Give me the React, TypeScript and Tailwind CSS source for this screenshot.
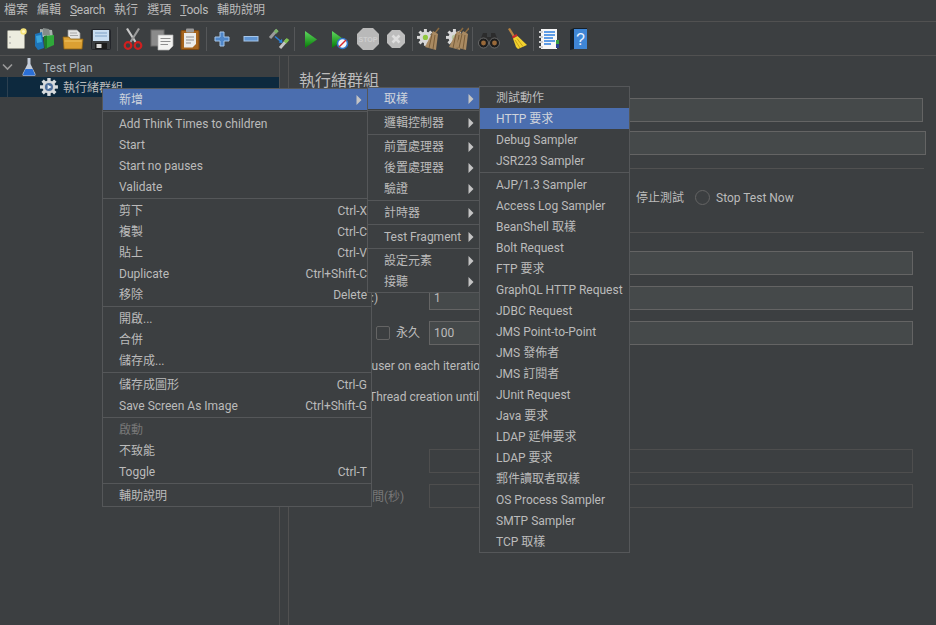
import React from "react";

const fontCls = "font-['Roboto','Noto_Sans_CJK_TC',sans-serif]";

function Ic({ children }: { children: React.ReactNode }) {
  return (
    <div className="w-[28.3px] h-[22px] flex items-center justify-center shrink-0">
      <svg width="24" height="24" viewBox="0 0 24 24">{children}</svg>
    </div>
  );
}
const Sep = () => <div className="w-[4px] h-[24px] shrink-0 flex justify-center"><div className="w-px h-full bg-[#555759]" /></div>;

const Gear = ({ x = 0, y = 0, s = 1, c = "#d8d8d8" }: { x?: number; y?: number; s?: number; c?: string }) => (
  <g transform={`translate(${x} ${y}) scale(${s})`}>
    <circle cx="8" cy="8" r="5.6" fill={c} />
    {[0, 45, 90, 135, 180, 225, 270, 315].map((a) => (
      <rect key={a} x="6.6" y="0" width="2.8" height="3.5" fill={c} transform={`rotate(${a} 8 8)`} />
    ))}
  </g>
);

const BroomBody = ({ dx = 0 }: { dx?: number }) => (
  <g transform={`translate(${dx} 0)`}>
    <path d="M23 1 L19 6" stroke="#8a6a40" strokeWidth="1.5" />
    <path d="M17 4 L22 7 L20 23 L9 20 Z" fill="#a98a62" />
    <path d="M16 7 L13 21 M19 8 L17 22" stroke="#7a5e3a" strokeWidth="1" />
  </g>
);

function Icons1() {
  return (
    <>
      <Ic>
        <rect x="3.5" y="3.5" width="17" height="18" rx="1" fill="#ececdf" stroke="#9a9a90" />
        <circle cx="6" cy="10" r="0.8" fill="#999" />
        <circle cx="6" cy="16" r="0.8" fill="#999" />
        <circle cx="19.5" cy="4.5" r="3.2" fill="#f4e27a" />
        <circle cx="19.5" cy="4.5" r="1.6" fill="#fff6c0" />
      </Ic>
      <Ic>
        <path d="M8 2 L20 3 L21 10 L8 10 Z" fill="#a9b0ae" />
        <path d="M11 1 L17 2 L18 8 L11 8 Z" fill="#858c8a" />
        <path d="M3 7 L10 5 L12 21 L6 23 L3 19 Z" fill="#1d74b8" />
        <path d="M4 9 L9 8 L10 15 L5 16 Z" fill="#3aa4dc" />
        <path d="M12 9 L22 8 L22 18 L13 22 Z" fill="#2fa83a" />
        <path d="M12 9 L15 8.6 L15 21 L13 22 Z" fill="#1d7d27" />
      </Ic>
      <Ic>
        <path d="M7 3 L16 3 L19 6 L19 13 L7 13 Z" fill="#e4e4e4" stroke="#9a9a9a" strokeWidth="0.7" />
        <path d="M9 6 H16 M9 8.5 H17" stroke="#a8a8a8" />
        <path d="M2 10 L8 10 L9.5 12 L22 12 L21 22 L3 22 Z" fill="#dca032" stroke="#8d6212" strokeWidth="0.8" />
        <path d="M3.5 14 H20.5" stroke="#efc565" />
      </Ic>
      <Ic>
        <rect x="2.5" y="2.5" width="19" height="20" rx="1" fill="#3a3d40" stroke="#23252a" />
        <rect x="4" y="3" width="16" height="11" fill="#c9ddf0" />
        <path d="M6 6 H18 M6 9 H18" stroke="#7d9fc4" />
        <rect x="6" y="16" width="12" height="6" fill="#1c1c1c" />
        <rect x="7.5" y="17" width="5" height="4" fill="#d8d8d8" />
      </Ic>
      <Sep />
      <Ic>
        <path d="M6 1.5 L14.5 15" stroke="#c9c9c9" strokeWidth="2.2" />
        <path d="M18 1.5 L9.5 15" stroke="#9a9a9a" strokeWidth="2.2" />
        <circle cx="7" cy="18.5" r="3.3" fill="none" stroke="#cf1f1f" strokeWidth="2.2" />
        <circle cx="17" cy="18.5" r="3.3" fill="none" stroke="#cf1f1f" strokeWidth="2.2" />
      </Ic>
      <Ic>
        <rect x="1" y="3" width="13" height="16" fill="#8b8b8b" stroke="#6c6c6c" />
        <path d="M8 8 L23 8 L23 19 L19 23 L8 23 Z" fill="#f2f2f0" stroke="#b0b0b0" strokeWidth="0.7" />
        <path d="M10.5 11.5 H20.5 M10.5 14.5 H20.5 M10.5 17.5 H18" stroke="#8e8e8e" />
      </Ic>
      <Ic>
        <rect x="3" y="3.5" width="18" height="19" rx="1" fill="#a6641c" stroke="#7a4710" />
        <path d="M6 6 L18 6 L18 17 L14.5 20.5 L6 20.5 Z" fill="#ececea" />
        <rect x="8" y="1.5" width="8" height="4" rx="1" fill="#9a9a9a" />
        <path d="M8 10 H16 M8 13 H16 M8 16 H13" stroke="#8e8e8e" />
      </Ic>
      <Sep />
      <Ic>
        <path d="M10 5 H14 V10 H19 V14 H14 V19 H10 V14 H5 V10 H10 Z" fill="#4f86c8" stroke="#a5c6ea" strokeWidth="1" />
      </Ic>
      <Ic>
        <rect x="5" y="9.5" width="14" height="4.5" fill="#5f94d2" stroke="#a5c6ea" strokeWidth="1" />
      </Ic>
      <Ic>
        <path d="M3 11 L10 3" stroke="#9b9b9b" strokeWidth="3" />
        <path d="M8 5.5 L10.5 3" stroke="#7bb46a" strokeWidth="3.4" />
        <path d="M13 21 L20 13" stroke="#c4c4c4" strokeWidth="3" />
        <path d="M18 15.5 L21 12" stroke="#7fc24f" strokeWidth="3.4" />
        <path d="M8 9.5 L14.5 15" stroke="#2a7fd8" strokeWidth="1.5" />
        <path d="M15.5 16 L15 11.8 L11.6 15.4 Z" fill="#2a7fd8" />
      </Ic>
      <Sep />
    </>
  );
}

function Icons2() {
  return (
    <>
      <Ic>
        <defs>
          <linearGradient id="pl" x1="0" y1="0" x2="0" y2="1">
            <stop offset="0" stopColor="#5fd85f" />
            <stop offset="1" stopColor="#067a06" />
          </linearGradient>
        </defs>
        <path d="M6 4 L18 12.5 L6 21 Z" fill="url(#pl)" />
      </Ic>
      <Ic>
        <path d="M5 4 L17 12.5 L5 21 Z" fill="url(#pl)" />
        <circle cx="15.5" cy="16.5" r="5" fill="#f4f8fc" stroke="#2f73c8" strokeWidth="1.6" />
        <path d="M12 20 L19 13" stroke="#d8262a" strokeWidth="1.5" />
      </Ic>
      <Ic>
        <path d="M7 1 H17 L23 7 V17 L17 23 H7 L1 17 V7 Z" fill="#b9b9b9" />
        <text x="12" y="14.5" textAnchor="middle" fontSize="7" fontWeight="700" fill="#cfcfcf" fontFamily="Liberation Sans, sans-serif">STOP</text>
      </Ic>
      <Ic>
        <path d="M8 3 H16 L21 8 V16 L16 21 H8 L3 16 V8 Z" fill="#bdbdbd" />
        <path d="M8.5 8.5 L15.5 15.5 M15.5 8.5 L8.5 15.5" stroke="#dedede" strokeWidth="2.6" />
      </Ic>
      <Sep />
      <Ic>
        <Gear x={1} y={2} s={1.05} />
        <circle cx="9.4" cy="10.4" r="2.6" fill="#8fc63f" />
        <BroomBody />
      </Ic>
      <Ic>
        <Gear x={1} y={2} s={1.05} />
        <circle cx="9.4" cy="10.4" r="2.6" fill="#b9c8a0" />
        <BroomBody dx={-5} />
        <BroomBody dx={1} />
      </Ic>
      <Sep />
      <Ic>
        <path d="M6 6 H10 V10 H14 V6 H18 L22 16 H2 Z" fill="#2c2c2c" />
        <circle cx="6.5" cy="16" r="5" fill="#1d1d1d" stroke="#777" strokeWidth="0.8" />
        <circle cx="17.5" cy="16" r="5" fill="#1d1d1d" stroke="#777" strokeWidth="0.8" />
        <circle cx="6.5" cy="16" r="2.4" fill="#9a6a3a" />
        <circle cx="17.5" cy="16" r="2.4" fill="#9a6a3a" />
      </Ic>
      <Ic>
        <path d="M3 2 L5 1 L10 9 L8 10 Z" fill="#b88440" />
        <path d="M7 9.5 L11.5 7 L12.5 9 L8 11.5 Z" fill="#d02a2a" />
        <path d="M8 11.5 L12.5 9 L22 18 L13 22 L11 20 Z" fill="#f2d22e" />
        <path d="M10 13 L15 21 M12 11.5 L18 19.5" stroke="#c79f18" />
      </Ic>
      <Sep />
      <Ic>
        <path d="M4 2 H20 V22 H4 Z" fill="#f6f6f6" />
        <path d="M7 5 H18 M7 8 H18 M7 11 H16 M7 14 H18 M7 17 H14" stroke="#2d7fe0" strokeWidth="1.3" />
        <rect x="19" y="13" width="3" height="4" fill="#3aa040" />
        <rect x="19" y="17" width="3" height="4" fill="#2a3f8a" />
        <path d="M2 5 H6 M2 10 H6 M2 15 H6 M2 20 H6" stroke="#cfcfcf" strokeWidth="1.8" />
      </Ic>
      <Ic>
        <path d="M4 3 L8 1 H21 V22 H8 L4 23 Z" fill="#15202a" />
        <rect x="8" y="2" width="13" height="20" fill="#3f86d6" />
        <text x="14.5" y="18" textAnchor="middle" fontSize="16" fill="#e8f2ff" fontFamily="Liberation Sans, sans-serif">?</text>
      </Ic>
    </>
  );
}

const Arrow = () => (
  <svg width="6" height="10" viewBox="0 0 6 10" className="shrink-0">
    <path d="M0.5 0 L5.5 5 L0.5 10 Z" fill="#c4c4c4" />
  </svg>
);

function Row({ t, k, arrow, hi, dis, arrowPad = "pr-[5px]" }: { t: string; k?: string; arrow?: boolean; hi?: boolean; dis?: boolean; arrowPad?: string }) {
  return (
    <div className={`h-[21px] flex items-center justify-between whitespace-nowrap pl-[16px] ${arrow ? arrowPad : "pr-[4px]"} ${hi ? "bg-[#4b6eaf] text-[#cfd4dc]" : ""} ${dis ? "text-[#777777]" : ""}`}>
      <span className="pt-[1px]">{t}</span>
      {k && <span className="pt-[1px]">{k}</span>}
      {arrow && <Arrow />}
    </div>
  );
}
const MSep = () => <div className="h-[3px] flex items-center"><div className="h-px w-full bg-[#555759]" /></div>;

const Input = ({ v, cls = "" }: { v?: string; cls?: string }) => (
  <div className={`h-[24px] border border-[#646464] bg-[#45494a] pl-[4px] flex items-center text-[#bbbbbb] ${cls}`}>{v}</div>
);
const Dis = ({ cls = "" }: { cls?: string }) => <div className={`h-[24px] border border-[#4e4e4e] bg-[#3c3f41] ${cls}`} />;

export default function App() {
  return (
    <div className={`relative w-[936px] h-[625px] overflow-hidden bg-[#3c3f41] text-[#bbbbbb] text-[12px] leading-none flex flex-col ${fontCls}`}>
      {/* menu bar */}
      <div className="h-[22px] shrink-0 flex items-center pl-[4px] gap-[9px] border-b border-[#515151] pb-[2px]">
        <span>檔案</span>
        <span>編輯</span>
        <span className="tracking-[-0.3px]"><span className="underline">S</span>earch</span>
        <span>執行</span>
        <span>選項</span>
        <span className="tracking-[-0.3px]"><span className="underline">T</span>ools</span>
        <span>輔助說明</span>
      </div>
      {/* toolbar */}
      <div className="h-[34px] shrink-0 flex items-center pl-[2px] border-b border-[#515151]">
        <Icons1 />
        <Icons2 />
      </div>
      {/* main */}
      <div className="flex-1 flex min-h-0">
        <div className="w-[280px] shrink-0 border-r border-[#515151] pt-[1px]">
          <div className="h-[20px] flex items-center text-[#a9b1b8]">
            <svg width="14" height="14" viewBox="0 0 14 14" className="ml-[1px]">
              <path d="M2 4.5 L6.5 9 L11 4.5" fill="none" stroke="#9a9a9a" strokeWidth="1.6" />
            </svg>
            <svg width="18" height="20" viewBox="0 0 18 20" className="ml-[5px]">
              <path d="M7.5 1 H10.5 V7 L15.5 17 Q16 19 14 19 H4 Q2 19 2.5 17 L7.5 7 Z" fill="#c4ccd8" />
              <path d="M5.5 12 H12.5 L15 17.5 Q15 18.6 14 18.6 H4 Q3 18.6 3 17.5 Z" fill="#2b6fd6" />
            </svg>
            <span className="ml-[5px] pt-[2px]">Test Plan</span>
          </div>
          <div className="h-[20px] flex items-center bg-[#0d293e] w-[279px]">
            <div className="ml-[7px] h-full w-px bg-[#2c4050]" />
            <svg width="20" height="20" viewBox="0 0 20 20" className="ml-[31px]">
              <g transform="translate(1 1) scale(1.12)">
                <circle cx="8" cy="8" r="5.8" fill="#d0d4d8" />
                {[0, 45, 90, 135, 180, 225, 270, 315].map((a) => (
                  <rect key={a} x="6.5" y="0" width="3" height="3.6" fill="#d8dcdf" transform={`rotate(${a} 8 8)`} />
                ))}
                <circle cx="8" cy="8" r="3.6" fill="#4d6f9c" />
                <path d="M6.8 6 L10.4 8 L6.8 10 Z" fill="#e6edf5" />
              </g>
            </svg>
            <span className="ml-[4px] pt-[2px]">執行緒群組</span>
          </div>
        </div>
        <div className="w-[9px] shrink-0 border-r border-[#515151]" />
        <div className="flex-1 min-w-0 flex flex-col">
          <div className="pl-[10px] pt-[17px] text-[16px] leading-[16px] h-[42px]">執行緒群組</div>
          <Input cls="ml-[70px] mr-[13px]" />
          <Input cls="ml-[70px] mr-[10px] mt-[9px]" />
          <div className="h-px bg-[#515151] mt-[13px] ml-[11px] mr-[12px]" />
          <div className="h-[63px] flex items-center pl-[347px] pb-[6px]">
            <span>停止測試</span>
            <div className="ml-[11px] w-[15px] h-[15px] rounded-full border border-[#646464]" />
            <span className="ml-[6px]">Stop Test Now</span>
          </div>
          <div className="h-px bg-[#515151] ml-[11px] mr-[12px]" />
          <div className="mt-[18px] flex flex-col gap-[11px]">
            <div className="flex items-center">
              <div className="w-[140px]" />
              <Input cls="flex-1 mr-[23px]" />
            </div>
            <div className="flex items-center">
              <div className="w-[140px] pl-[82px]">:)</div>
              <Input v="1" cls="flex-1 mr-[23px]" />
            </div>
            <div className="flex items-center">
              <div className="w-[140px] flex items-center pl-[87px]">
                <div className="w-[14px] h-[14px] rounded-[2px] border border-[#646464]" />
                <span className="ml-[6px]">永久</span>
              </div>
              <Input v="100" cls="flex-1 mr-[23px]" />
            </div>
          </div>
          <div className="mt-[14px] h-[14px] pl-[49px] flex items-center whitespace-nowrap">Same user on each iteration</div>
          <div className="mt-[17px] h-[14px] pl-[48px] flex items-center whitespace-nowrap">Delay Thread creation until needed</div>
          <div className="mt-[45px] flex flex-col gap-[11px] text-[#777777]">
            <div className="flex items-center">
              <div className="w-[140px] pl-[11px]">持續時間(秒)</div>
              <Dis cls="flex-1 mr-[23px]" />
            </div>
            <div className="flex items-center">
              <div className="w-[140px] pl-[11px] pt-[2px] whitespace-nowrap">執行緒啟動時間(秒)</div>
              <Dis cls="flex-1 mr-[23px]" />
            </div>
          </div>
        </div>
      </div>

      {/* context menus */}
      <div className="absolute left-[102px] top-[88px] w-[270px] border border-[#555759] bg-[#3c3f41] z-10">
        <Row t="新增" arrow hi arrowPad="pr-[9px]" />
        <MSep />
        <Row t="Add Think Times to children" />
        <Row t="Start" />
        <Row t="Start no pauses" />
        <Row t="Validate" />
        <MSep />
        <Row t="剪下" k="Ctrl-X" />
        <Row t="複製" k="Ctrl-C" />
        <Row t="貼上" k="Ctrl-V" />
        <Row t="Duplicate" k="Ctrl+Shift-C" />
        <Row t="移除" k="Delete" />
        <MSep />
        <Row t="開啟..." />
        <Row t="合併" />
        <Row t="儲存成..." />
        <MSep />
        <Row t="儲存成圖形" k="Ctrl-G" />
        <Row t="Save Screen As Image" k="Ctrl+Shift-G" />
        <MSep />
        <Row t="啟動" dis />
        <Row t="不致能" />
        <Row t="Toggle" k="Ctrl-T" />
        <MSep />
        <Row t="輔助說明" />
      </div>
      <div className="absolute left-[367px] top-[87px] w-[113px] border border-[#555759] bg-[#3c3f41] z-20">
        <Row t="取樣" arrow hi />
        <MSep />
        <Row t="邏輯控制器" arrow />
        <MSep />
        <Row t="前置處理器" arrow />
        <Row t="後置處理器" arrow />
        <Row t="驗證" arrow />
        <MSep />
        <Row t="計時器" arrow />
        <MSep />
        <Row t="Test Fragment" arrow />
        <MSep />
        <Row t="設定元素" arrow />
        <Row t="接聽" arrow />
      </div>
      <div className="absolute left-[479px] top-[86px] w-[151px] border border-[#555759] bg-[#3c3f41] z-30">
        <Row t="測試動作" />
        <Row t="HTTP 要求" hi />
        <Row t="Debug Sampler" />
        <Row t="JSR223 Sampler" />
        <MSep />
        <Row t="AJP/1.3 Sampler" />
        <Row t="Access Log Sampler" />
        <Row t="BeanShell 取樣" />
        <Row t="Bolt Request" />
        <Row t="FTP 要求" />
        <Row t="GraphQL HTTP Request" />
        <Row t="JDBC Request" />
        <Row t="JMS Point-to-Point" />
        <Row t="JMS 發佈者" />
        <Row t="JMS 訂閱者" />
        <Row t="JUnit Request" />
        <Row t="Java 要求" />
        <Row t="LDAP 延伸要求" />
        <Row t="LDAP 要求" />
        <Row t="郵件讀取者取樣" />
        <Row t="OS Process Sampler" />
        <Row t="SMTP Sampler" />
        <Row t="TCP 取樣" />
      </div>
    </div>
  );
}
